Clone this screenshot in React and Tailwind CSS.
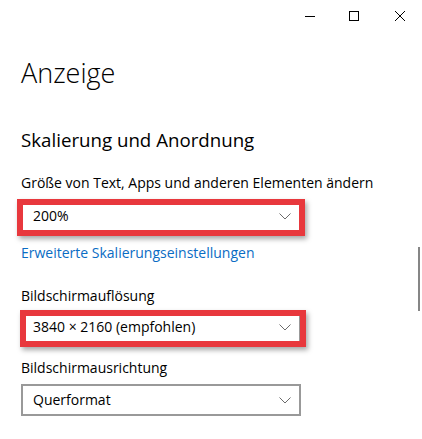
import React from "react";

function Chevron() {
  return (
    <svg width="12" height="7" viewBox="0 0 12 7" className="shrink-0">
      <path d="M0.5 0.5 L6 6 L11.5 0.5" fill="none" stroke="#6b6b6b" strokeWidth="1" />
    </svg>
  );
}

function Dropdown({ value, frame }) {
  return (
    <div className="relative w-[280px] h-[32px] border-2 border-[#999999] bg-white flex items-center justify-between pl-[10px] pr-[8px]">
      <span className="text-[14px] leading-[20px] text-black">{value}</span>
      <Chevron />
      {frame}
    </div>
  );
}

export default function App() {
  return (
    <div
      className="relative w-[422px] h-[439px] bg-white overflow-hidden text-black"
      style={{ fontFamily: '"Open Sans", "Noto Sans", sans-serif' }}
    >
      {/* title bar */}
      <div className="flex justify-end h-[32px]">
        <div className="w-[45px] h-[32px] flex items-center justify-center">
          <svg width="10" height="10" viewBox="0 0 10 10">
            <path d="M0 5.5 H10" stroke="#000" strokeWidth="1" />
          </svg>
        </div>
        <div className="w-[45px] h-[32px] flex items-center justify-center pr-[2px]">
          <svg width="10" height="10" viewBox="0 0 10 10">
            <rect x="0.5" y="0.5" width="9" height="9" fill="none" stroke="#000" strokeWidth="1" />
          </svg>
        </div>
        <div className="w-[45px] h-[32px] flex items-center justify-center">
          <svg width="10" height="10" viewBox="0 0 10 10">
            <path d="M0 0 L10 10 M10 0 L0 10" stroke="#000" strokeWidth="1" />
          </svg>
        </div>
      </div>

      <div className="pl-[21px]">
        <div className="mt-[23px] text-[27px] leading-[36px] font-light">Anzeige</div>
        <div className="mt-[36px] text-[18.7px] leading-[26px]">Skalierung und Anordnung</div>
        <div className="mt-[20px] text-[14px] leading-[20px]">Größe von Text, Apps und anderen Elementen ändern</div>
        <div className="mt-[7px]">
          <Dropdown
            value="200%"
            frame={
              <div className="absolute left-[-6px] top-[-3px] w-[288px] h-[37px] border-[6px] border-[#e8383d] shadow-[2px_3px_5px_rgba(0,0,0,0.35)]" />
            }
          />
        </div>
        <div className="mt-[11px] text-[14px] leading-[20px] text-[#0a6cc4]">Erweiterte Skalierungseinstellungen</div>
        <div className="mt-[23px] text-[14px] leading-[20px]">Bildschirmauflösung</div>
        <div className="mt-[5px]">
          <Dropdown
            value="3840 × 2160 (empfohlen)"
            frame={
              <div className="absolute left-[-3px] top-[-3px] w-[286px] h-[37px] border-[6px] border-[#e8383d] shadow-[2px_3px_5px_rgba(0,0,0,0.35)]" />
            }
          />
        </div>
        <div className="mt-[15px] text-[14px] leading-[20px]">Bildschirmausrichtung</div>
        <div className="mt-[6px]">
          <Dropdown value="Querformat" />
        </div>
      </div>

      {/* scrollbar */}
      <div className="absolute left-[418px] top-[247px] w-[2px] h-[64px] bg-[#868686]" />
    </div>
  );
}
